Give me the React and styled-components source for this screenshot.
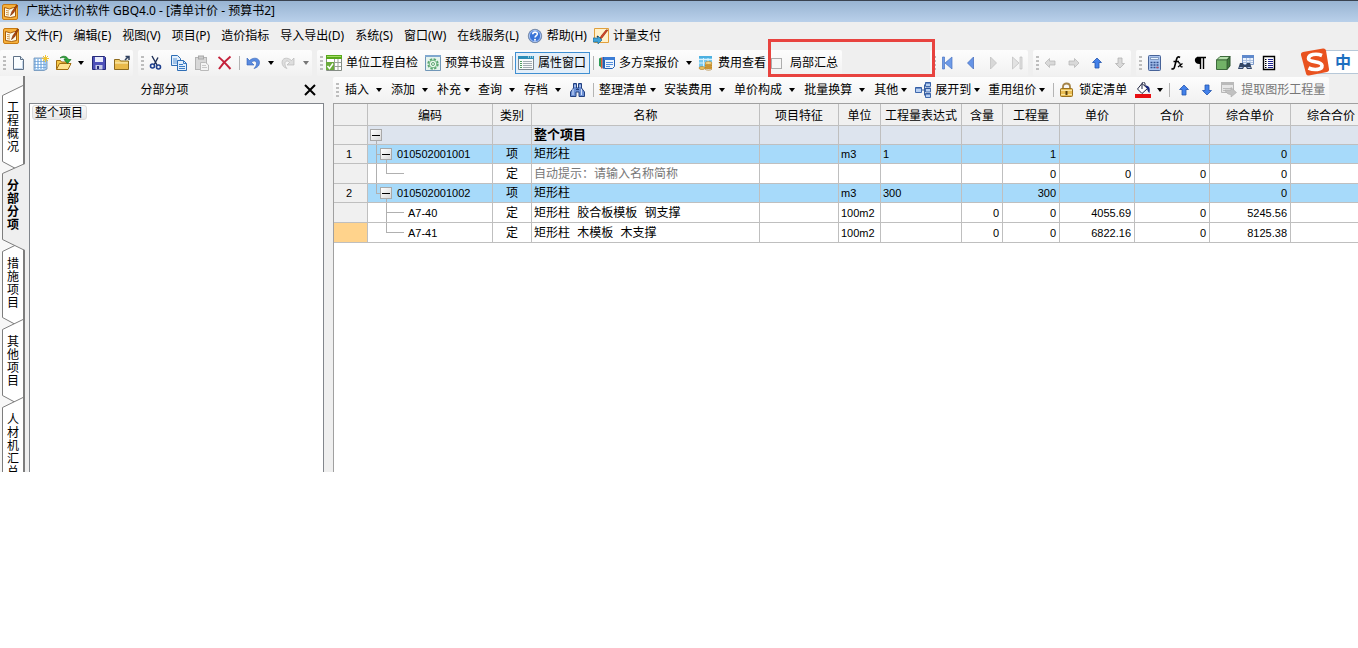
import React from 'react';
import styled, { createGlobalStyle, css } from 'styled-components';

const GlobalStyle = createGlobalStyle`
  * {
    box-sizing: border-box;
  }
  body {
    margin: 0;
    background: #fff;
    color: #000;
    font-family: 'Noto Sans', 'Noto Sans CJK SC', sans-serif;
    font-size: 12px;
    line-height: 16px;
  }
  button {
    border: 0;
    padding: 0;
    background: none;
    color: inherit;
    font: inherit;
    white-space: nowrap;
  }
  svg {
    display: block;
    flex: none;
  }
`

const TitleBar = styled.header`
  display: flex;
  align-items: center;
  gap: 8px;
  height: 22px;
  padding-left: 2px;
  border-top: 1px solid #39424f;
  background: linear-gradient(#98b4d2, #b9d0ea);
`

const Title = styled.h1`
  margin: 0;
  font-size: 12px;
  font-weight: 400;
  line-height: 20px;
  padding-bottom: 2px;
`

const MenuBar = styled.nav`
  display: flex;
  align-items: center;
  gap: 11px;
  height: 27px;
  padding-left: 3px;
  background: #efefef;
`

const MenuItem = styled.button`
  display: flex;
  align-items: center;
  gap: 4px;
`

const MenuLead = styled.div`
  display: flex;
  align-items: center;
  gap: 6px;
`

const HelpMenus = styled(MenuLead)`
  margin-left: -3px;
`

const Toolbar = styled.div`
  position: relative;
  display: flex;
  gap: 5px;
  height: 27px;
  padding-top: 1px;
  background: #efefef;
`

const Group = styled.div`
  display: flex;
  flex: none;
  align-items: center;
  height: 26px;
  border-radius: 2px;
  background: linear-gradient(#fdfdfd, #f1f1f1);
`

const Grip = styled.span`
  width: 3px;
  height: 15px;
  margin-left: 3px;
  margin-right: ${props => (props.$wide ? '3px' : 0)};
  background: repeating-linear-gradient(#bdbdbd 0 2px, transparent 2px 4px);
`

const Separator = styled.span`
  width: 1px;
  height: 14px;
  margin: 0 2px 0 3px;
  background: #b4b4b4;
`

const Slot = styled.div`
  flex: none;
  width: 78px;
`

const IconButton = styled.button`
  display: flex;
  align-items: center;
  justify-content: center;
  width: 23px;
  height: 22px;
`

const ArrowButton = styled.button`
  display: flex;
  align-items: center;
  justify-content: center;
  width: 12px;
  height: 22px;
`

const TextButton = styled.button`
  display: flex;
  align-items: center;
  gap: 4px;
  height: 22px;
  padding: 0 4px 0 3px;
  color: ${props => (props.disabled ? '#777' : '#000')};
  ${props => props.$active && css`
    padding: 0 3px 0 2px;
    border: 1px solid #3f8fd2;
    background: #e4eff9;
  `}
`

const DropButton = styled(TextButton)`
  gap: ${props => (props.$tight ? '3px' : '7px')};
  padding-right: ${props => (props.$tight ? '5px' : '6px')};
`

const DropLabel = styled.span`
  display: flex;
  align-items: center;
  gap: 4px;
`

const Caret = styled.span`
  border: solid transparent;
  border-width: 4px 3px 0;
  border-top-color: ${props => (props.$muted ? '#777' : '#000')};
`

const ScopeLabel = styled.label`
  position: relative;
  display: flex;
  align-items: center;
  gap: 8px;
  height: 26px;
  padding: 0 4px 0 1px;
`

const CheckBox = styled.input`
  appearance: none;
  width: 11px;
  height: 11px;
  margin: 0;
  border: 1px solid #adadad;
  background: #f6f6f6;
`

const Highlight = styled.span`
  position: absolute;
  top: -11px;
  left: -2px;
  width: 167px;
  height: 38px;
  border: 3px solid #e8433f;
  pointer-events: none;
  z-index: 2;
`

const ImeBar = styled.div`
  position: absolute;
  top: -1px;
  right: 0;
  display: flex;
  align-items: center;
`

const ImeMode = styled.button`
  width: 40px;
  height: 24px;
  margin-left: -12px;
  padding-left: 10px;
  border: solid #b7c8d8;
  border-width: 1px 0;
  background: #fff;
  color: #1c6fc0;
  font-size: 16px;
  font-weight: 700;
  line-height: 20px;
`

const ImeMark = styled.svg`
  position: relative;
  z-index: 1;
`

const Workspace = styled.main`
  display: flex;
  height: 396px;
  overflow: hidden;
  background: #efefef;
`

const TabStrip = styled.div`
  flex: none;
  width: 25px;
  padding: 9px 0 0 2px;
  border-right: 2px solid #7d7d7d;
  background: #f7f7f7;
`

const Tab = styled.button`
  position: relative;
  z-index: ${props => (props.$selected ? 3 : 1)};
  display: flex;
  align-items: flex-start;
  width: 23px;
  height: 88px;
  margin-bottom: -10px;
  padding: 16px 0 0 5px;
  font-weight: ${props => (props.$selected ? 700 : 400)};
`

const TabShape = styled.svg`
  position: absolute;
  top: 0;
  left: 0;
`

const TabText = styled.span`
  position: relative;
  width: 12px;
  line-height: 13px;
  white-space: normal;
  word-break: break-all;
`

const SidePanel = styled.section`
  display: flex;
  flex: none;
  flex-direction: column;
  width: 299px;
  padding-left: 4px;
`

const PanelHeader = styled.div`
  display: flex;
  align-items: center;
  height: 27px;
  padding-right: 8px;
`

const PanelTitle = styled.h2`
  flex: 1;
  margin: 0;
  padding-right: 4px;
  font-size: 12px;
  font-weight: 400;
  text-align: center;
`

const TreeBox = styled.div`
  flex: 1;
  padding: 1px 2px;
  border: solid #82868c;
  border-width: 1px 1px 0;
  background: #fff;
`

const TreeNode = styled.button`
  height: 15px;
  padding: 0 3px 0 2px;
  border: 1px solid #dcdcdc;
  border-radius: 3px;
  background: linear-gradient(#fafafa, #e8e8e8);
  line-height: 13px;
`

const Content = styled.section`
  flex: 1;
  min-width: 0;
  margin-left: 9px;
  display: flex;
  flex-direction: column;
`

const GridBox = styled.div`
  flex: 1;
  overflow: hidden;
  border: solid #a0a0a0;
  border-width: 1px 0 0 1px;
  background: #fff;
`

const Grid = styled.table`
  width: 1038px;
  table-layout: fixed;
  border-collapse: separate;
  border-spacing: 0;
`

const cellBase = css`
  padding: 0;
  border: solid #bfbfbf;
  border-width: 0 1px 1px 0;
  overflow: hidden;
  white-space: nowrap;
`

const HeadCell = styled.th`
  ${cellBase}
  height: 22px;
  padding-top: 2px;
  background: #f0f0f0;
  font-weight: 400;
`

const rowColors = {
  project: '#dde4ee',
  list: '#a7dafa',
  quota: '#fff'
}

const Row = styled.tr`
  height: ${props => (props.$kind === 'quota' ? '20px' : '19px')};
  background: ${props => rowColors[props.$kind]};
`

const Cell = styled.td`
  ${cellBase}
  padding: 0 2px;
  line-height: 14px;
  text-align: ${props => props.$align || 'left'};
`

const ValueCell = styled(Cell)`
  padding: 0 3px 0 2px;
  font-family: 'Liberation Sans', 'Noto Sans CJK SC', sans-serif;
  font-size: 11px;
`

const NumberCell = styled(ValueCell)`
  padding: 0 3px 0 0;
  background: ${props => (props.$current ? '#ffd38c' : '#f0f0f0')};
`

const NameCell = styled(Cell)`
  padding: 2px 2px 0;
  font-family: 'Liberation Mono', 'Noto Sans CJK SC', monospace;
  font-size: ${props => (props.$bold ? '13px' : '12px')};
  font-weight: ${props => (props.$bold ? 700 : 400)};
  color: ${props => (props.$hint ? '#777' : '#000')};
`

const CodeCell = styled(ValueCell)`
  position: relative;
  padding: 0;
`

const codeIndent = {
  project: '2px',
  list: '12px',
  quota: '40px'
}

const CodeLine = styled.div`
  position: relative;
  display: flex;
  align-items: center;
  gap: 5px;
  padding-left: ${props => codeIndent[props.$kind]};
`

const Guides = styled.svg`
  position: absolute;
  top: 0;
  left: 0;
`

const Toggle = styled.button`
  display: flex;
  align-items: center;
  justify-content: center;
  width: 12px;
  height: 12px;
  border: 1px solid #a8a8a8;
  background: linear-gradient(135deg, #fff, #d8d8d8);

  &::after {
    content: '';
    width: 8px;
    height: 1px;
    background: #000;
  }
`

const Svg = ({ children }) => (
  <svg width="16" height="16" viewBox="0 0 16 16" fill="none" aria-hidden="true">{children}</svg>
)

const icons = {
  app: (
    <Svg>
      <rect x=".5" y=".5" width="15" height="15" rx="1.5" fill="#f6b13c" stroke="#c87a10" />
      <path d="M2.500 3.500l5 1.500 4-1.500 2 0v9l-5 1-6-1z" fill="#fffbea" stroke="#a85d0a" />
      <path d="M4 6.500l3 .5M4 8.500l3 .5M4 10.500l3 .5" stroke="#c07a20" strokeWidth=".8" />
      <path d="M14.500 1L10 7.500l-1.500 4 3-2.500 4-7.500z" fill="#b4480d" stroke="#6f2504" strokeWidth=".6" />
    </Svg>
  ),
  newDoc: (
    <Svg>
      <path d="M3.500 1.500h7l3 3v10h-10z" fill="#fafdff" stroke="#5f7186" />
      <path d="M10.500 1.500v3h3" fill="#dce9f6" stroke="#5f7186" />
      <path d="M12.500 6v7.500h-8" stroke="#c6d7ea" />
    </Svg>
  ),
  newBook: (
    <Svg>
      <path d="M1 3h10l3 2v9l-3 1.500H1z" fill="#a8cdf0" stroke="#6a8fb8" strokeWidth=".8" />
      <path d="M3.500 4v10M6.500 4v10M9.500 4v10" stroke="#fff" />
      <path d="M1 6.500h12M1 9.500h12M1 12.500h12" stroke="#6a9bd0" strokeWidth=".7" />
      <path d="M12.500 0v7M9 3.500h7M10 1l5 5M15 1l-5 5" stroke="#f2c430" />
    </Svg>
  ),
  open: (
    <Svg>
      <path d="M.5 14.500v-9h4l1 1.500h6v3" fill="#f7c948" stroke="#a26d10" />
      <path d="M.5 14.500l3-6h11.500l-3 6z" fill="#ffe48e" stroke="#a26d10" />
      <path d="M4 3c3-3 7-2 8.500 1.500H15l-3.500 4-3.500-4h2C9 2.500 7 2 4 3z" fill="#2da83a" stroke="#14701e" strokeWidth=".7" />
    </Svg>
  ),
  save: (
    <Svg>
      <path d="M1.500 1.500h12l1 1v12h-13z" fill="#4d50b8" stroke="#252a78" />
      <path d="M4 2h8v5H4z" fill="#e9ecfb" />
      <path d="M4.500 10h7v4.500h-7z" fill="#c6cbe6" />
      <path d="M6 11h2v3H6z" fill="#252a78" />
    </Svg>
  ),
  folderUp: (
    <Svg>
      <path d="M.5 14.500v-10h5l1 1.500h8v8.500z" fill="#f3cf6c" stroke="#8d6a1e" />
      <path d="M1 8h13v6H1z" fill="#e9b94a" />
      <path d="M1 8h13" stroke="#fdf0bd" />
      <path d="M11 5l3-3M11.500 1.500h3.500v3.500" stroke="#30415f" strokeWidth="1.500" />
    </Svg>
  ),
  cut: (
    <Svg>
      <path d="M4 1l5 9M10 2.500L6 10" stroke="#1c2d55" strokeWidth="1.400" />
      <circle cx="4.500" cy="11" r="2" stroke="#1e3f8e" strokeWidth="1.600" />
      <circle cx="10.500" cy="12" r="2" stroke="#1e3f8e" strokeWidth="1.600" />
    </Svg>
  ),
  copy: (
    <Svg>
      <path d="M.5.5h6l3 3v7h-9z" fill="#e2effc" stroke="#2f6eb5" />
      <path d="M2 4h4M2 6h6M2 8h6" stroke="#5c96d6" />
      <path d="M6.500 5.500h6l3 3v7h-9z" fill="#e2effc" stroke="#2f6eb5" />
      <path d="M12.500 5.500v3h3M8 9.500h4M8 11.500h6M8 13.500h6" stroke="#3c7cc4" />
    </Svg>
  ),
  paste: (
    <Svg>
      <rect x="1.500" y="2.500" width="11" height="12" fill="#d8d8d8" stroke="#b4b4b4" />
      <rect x="4.500" y="1" width="5" height="3" fill="#cdcdcd" stroke="#a8a8a8" />
      <path d="M6.500 7.500h5l3 2.500v5.500h-8z" fill="#f4f4f4" stroke="#bababa" />
      <path d="M8 10.500h4M8 12.500h5" stroke="#c8c8c8" />
    </Svg>
  ),
  remove: <Svg><path d="M1.500 2c4 3 8 7.500 12 12M13.500 1.500C9 5 5 9.500 2 14" stroke="#c4203a" strokeWidth="2" /></Svg>,
  undo: (
    <Svg>
      <path d="M1 3v7h7L5.500 7.500C8 5 10.500 6 10.500 8.500c0 2-1 3.500-2.500 5 4-1 5.500-3.500 5.500-6C13.500 3 8 1.500 3.500 5.500z" fill="#5a8be0" stroke="#2f5fb5" strokeWidth=".6" />
    </Svg>
  ),
  redo: (
    <Svg>
      <path d="M13 3v7H6l2.500-2.500C6.500 5 4 6 4 8.500c0 2 .5 3.500 2 5-3.500-1-5-3.500-5-6C1 3 6 1.500 10.500 5.500z" fill="#dedede" stroke="#b9b9b9" strokeWidth=".7" />
    </Svg>
  ),
  check: (
    <Svg>
      <path d="M.5.5h15v15H.5z" fill="#fff" stroke="#848c84" />
      <path d="M0 0h16v4H0z" fill="#58a81c" />
      <path d="M1 1h14v1H1z" fill="#a3dc62" />
      <path d="M1 7.500h14M1 11.500h14M8.500 4v11M12 4v11" stroke="#99a399" />
      <path d="M0 7h8v8H0z" fill="#6aab3c" />
      <path d="M1.500 11l2 2.500L7 8.500" stroke="#fff" strokeWidth="1.500" />
    </Svg>
  ),
  gear: (
    <Svg>
      <path d="M.5.5h15v15H.5z" fill="#e5f3ed" stroke="#7197b8" />
      <path d="M0 0h16v2H0z" fill="#80a8cf" />
      <circle cx="8" cy="9" r="4.800" fill="#eff8ef" stroke="#5da772" strokeWidth="1.800" strokeDasharray="2.400 1.370" />
      <circle cx="8" cy="9" r="3.800" stroke="#72b683" />
      <circle cx="8" cy="9" r="1.500" stroke="#5da772" />
    </Svg>
  ),
  properties: (
    <Svg>
      <path d="M.5 1.500h15v13H.5z" fill="#f8fafa" stroke="#7c8890" />
      <path d="M0 1h16v3H0z" fill="#2c8db8" />
      <path d="M10 2h1M12 2h1M14 2h1" stroke="#fff" />
      <path d="M2 6.500h2M2 8.500h2M2 10.500h2M2 12.500h2" stroke="#4f9e5d" />
      <path d="M5 6.500h9M5 8.500h9M5 10.500h9M5 12.500h9" stroke="#a2abb2" />
    </Svg>
  ),
  plans: (
    <Svg>
      <path d="M0 3.500l2-1v10l-2-2z" fill="#2e9c58" />
      <path d="M2 2.500h1.500v11H2z" fill="#e05a32" />
      <path d="M3.500 2H5v12l-1.500-1z" fill="#2560b5" />
      <path d="M5.500 2.500h10v9l-2 2h-8z" fill="#edf5ff" stroke="#2560b5" />
      <path d="M5 2h11v3H5z" fill="#3c7dd5" />
      <path d="M7 7.500h7M7 9.500h7M7 11.500h4" stroke="#5590dd" />
    </Svg>
  ),
  fee: (
    <Svg>
      <path d="M1 1h13v11H1z" fill="#77c8ee" />
      <path d="M1 4.500h13M1 8h13M5.500 1v11M10 1v11" stroke="#d9f2fc" />
      <path d="M1 1h13v2H1z" fill="#4cb0e0" />
      <path d="M7 8h7v6H7z" fill="#dba33c" />
      <ellipse cx="10.500" cy="8" rx="3.500" ry="1.500" fill="#f6d98a" stroke="#a87722" strokeWidth=".6" />
      <path d="M7 10c1 1.500 6 1.500 7 0M7 12c1 1.500 6 1.500 7 0M7 14c1 1.500 6 1.500 7 0" stroke="#a87722" strokeWidth=".7" />
      <ellipse cx="4" cy="13" rx="3" ry="1.500" fill="#ecc161" stroke="#a87722" strokeWidth=".6" />
    </Svg>
  ),
  help: (
    <Svg>
      <circle cx="8" cy="8" r="6.700" fill="#3a74d8" stroke="#7d8ea8" />
      <circle cx="8" cy="8" r="5.600" stroke="#c6d8f8" strokeWidth=".8" />
      <path d="M5.700 6.300C5.900 3.300 10.600 3.500 10.300 6.200 10 7.600 8.200 7.600 8 9.500" stroke="#fff" strokeWidth="1.600" />
      <circle cx="8" cy="11.800" r="1" fill="#fff" />
    </Svg>
  ),
  pay: (
    <Svg>
      <path d="M1.500.5h14v14h-14z" fill="#fff1cb" stroke="#e1a03c" />
      <path d="M4 8l3 3 7-9" stroke="#3b2a1d" strokeWidth="1.300" />
      <path d="M15 2l-6 8-2 1 1-3 5-6z" fill="#d8482a" stroke="#8e2713" strokeWidth=".5" />
      <path d="M0 10h5V8l4 4-4 4v-2H0z" fill="#3fa4d8" stroke="#1d6a98" strokeWidth=".7" />
    </Svg>
  ),
  first: <Svg><path d="M2.500 2h2v12h-2zM12 2v12L5 8z" fill="#6e9be8" stroke="#4a74c2" strokeWidth=".7" /></Svg>,
  prev: <Svg><path d="M10.500 2v12l-6-6z" fill="#6694e6" stroke="#4068ba" strokeWidth=".7" /></Svg>,
  next: <Svg><path d="M4.500 2v12l6-6z" fill="#d8d8d8" stroke="#bdbdbd" strokeWidth=".7" /></Svg>,
  last: <Svg><path d="M11 2h2v12h-2zM3.500 2v12l6.500-6z" fill="#e2e2e2" stroke="#bdbdbd" strokeWidth=".7" /></Svg>,
  left: <Svg><path d="M2 8l4.500-4.500V6H12v4H6.500v2.500z" fill="#d9d9d9" stroke="#b3b3b3" strokeWidth=".7" /></Svg>,
  right: <Svg><path d="M13 8L8.500 3.500V6H3v4h5.500v2.500z" fill="#d9d9d9" stroke="#b3b3b3" strokeWidth=".7" /></Svg>,
  up: <Svg><path d="M8 3l4.500 4.500H10V13H6V7.500H3.500z" fill="#4381ea" stroke="#2455ad" strokeWidth=".8" /></Svg>,
  down: <Svg><path d="M8 13l4.500-4.500H10V3H6v5.500H3.500z" fill="#4381ea" stroke="#2455ad" strokeWidth=".8" /></Svg>,
  downOff: <Svg><path d="M8 13l4.500-4.500H10V3H6v5.500H3.500z" fill="#d9d9d9" stroke="#b3b3b3" strokeWidth=".8" /></Svg>,
  calc: (
    <Svg>
      <rect x="2.500" y=".5" width="12" height="15" rx="1" fill="#a9c3ee" stroke="#476398" />
      <path d="M4.500 2.500h8v2h-8z" fill="#eaf5ff" stroke="#52709f" strokeWidth=".6" />
      <path d="M4.500 7.500h8M4.500 10h8M4.500 12.500h8" stroke="#33508f" strokeWidth="1.500" strokeDasharray="2 1" />
      <path d="M10.500 12.500h2" stroke="#c2485e" strokeWidth="1.500" />
    </Svg>
  ),
  formula: (
    <Svg>
      <path d="M11 2.500c-2-1.500-3 0-3.500 2L5.500 12c-.5 2-1.500 2.500-3 1.500M4.500 6.500H10" stroke="#000" strokeWidth="1.600" />
      <path d="M9 8c1.500-1 2 0 2.300 2 .3 1.800 1 2.500 2.200 1.500M13.500 8.500L9 12" stroke="#000" strokeWidth="1.200" />
    </Svg>
  ),
  paragraph: (
    <Svg>
      <path d="M8 2v7C1.500 9.500 1.500 2 6 2z" fill="#000" />
      <path d="M5 2.500h9M8.500 2v12M11.500 2v12" stroke="#000" strokeWidth="1.400" />
    </Svg>
  ),
  cube: (
    <Svg>
      <path d="M1.500 5l3.500-3.500h10L12 5z" fill="#b6e0ac" stroke="#3e6b3c" />
      <path d="M12 5l3-3.500v9.500L12 14.500z" fill="#417b3e" stroke="#2d552c" />
      <path d="M1.500 5H12v9.500H1.500z" fill="#72b267" stroke="#3e6b3c" />
    </Svg>
  ),
  findTable: (
    <Svg>
      <path d="M4.500.5h11v9h-11z" fill="#eef4fd" stroke="#7b98c8" />
      <path d="M4 0h12v3H4z" fill="#5f89cc" />
      <path d="M5 5.500h10M5 7.500h10M8.500 3v6M12 3v6" stroke="#a9bfdf" />
      <path d="M2 8h3l1 2h2l1-2h3l2 6h-5l-1-2H6l-1 2H0z" fill="#344765" />
      <path d="M1.500 12.500h3M9.500 12.500h3" stroke="#a9bfe4" />
    </Svg>
  ),
  list: (
    <Svg>
      <path d="M2.500 1.500h11v13h-11z" fill="#fff" stroke="#000" strokeWidth="1.400" />
      <path d="M4 4.500h1.500M4 6.500h1.500M4 8.500h1.500M4 10.500h1.500M4 12.500h1.500" stroke="#000" />
      <path d="M7 4.500h5M7 6.500h5M7 8.500h5M7 10.500h5M7 12.500h5" stroke="#1f2490" />
    </Svg>
  ),
  binoculars: (
    <Svg>
      <path d="M3.500 1.500h3V6h2V1.500h3V6l3 4v4.500H9V10H6v4.500H.5V10l3-4z" fill="#6b8fd4" stroke="#23407f" />
      <path d="M3 7v6M11.500 7v6M5 3v2M10 3v2" stroke="#d3e1fb" />
      <path d="M6 7.500h3" stroke="#23407f" />
    </Svg>
  ),
  branch: (
    <Svg>
      <path d="M5 8h4M9.500 3v10M9 3h2M9 13h2" stroke="#3a5f9d" />
      <path d="M.5 5.500h6v5h-6zM10.500.5h5v4h-5zM10.500 6h5v4h-5zM10.500 11.500h5v4h-5z" fill="#b7d0f3" stroke="#3f68ad" />
      <path d="M.5 6h6M10.500 1h5M10.500 6.500h5M10.500 12h5" stroke="#2d559f" />
    </Svg>
  ),
  lock: (
    <Svg>
      <path d="M4 8V4.500c0-4 7-4 7 0V8" stroke="#a5854a" strokeWidth="1.800" />
      <rect x="1.500" y="6.500" width="12" height="8" rx="1" fill="#e9bd53" stroke="#98701f" />
      <path d="M2 8.500h11M2 12.500h11" stroke="#f9e39f" />
      <path d="M7.500 9v4" stroke="#59400d" strokeWidth="2" />
    </Svg>
  ),
  bucket: (
    <Svg>
      <path d="M0 12h16v4H0z" fill="#e80f12" />
      <path d="M7 1.500l5.500 5L7 11.500 2.500 7z" fill="#fff" stroke="#1d2340" />
      <path d="M7 7V1.500C7-.5 10-.5 10 2v2" stroke="#1d2340" />
      <path d="M10 3.500c4 0 5.500 2 4.500 7.500-1.500-1-2-2.500-2.500-4.500z" fill="#1b2a80" />
    </Svg>
  ),
  extract: (
    <Svg>
      <path d="M.5.5h12v10H.5z" fill="#e6e6e6" stroke="#b7b7b7" />
      <path d="M0 0h13v3H0z" fill="#bababa" />
      <path d="M2 6.500h8M2 8.500h5" stroke="#bcbcbc" />
      <path d="M4 8h6V5.500l5.500 5L10 15v-2.500C7 12.500 5 11 4 8z" fill="#c1c1c1" stroke="#a9a9a9" strokeWidth=".6" />
    </Svg>
  )
}

const CloseIcon = () => (
  <svg width="12" height="12" viewBox="0 0 12 12" aria-hidden="true">
    <path d="M1 1l10 10M11 1L1 11" stroke="#000" strokeWidth="2" />
  </svg>
)

const ImeLogo = () => (
  <ImeMark width="30" height="28" viewBox="0 0 30 28" aria-hidden="true">
    <path d="M3 4L23 .5c1.500-.2 2.500.5 3 2L29 21c.2 1.500-.5 2.500-2 3L9 27.500c-1.500.2-2.500-.5-3-2L1 7c-.3-1.500.5-2.700 2-3z" fill="#e9521f" />
    <path d="M22 7.500C16 5 8.500 6.500 8.500 10.500c0 4.500 13 2 13.500 7 .3 4.500-8 5-13.500 2.500" fill="none" stroke="#fff" strokeWidth="3.600" />
  </ImeMark>
)

const Tool = ({ icon, label, disabled }) => (
  <IconButton type="button" aria-label={label} disabled={disabled}>{icons[icon]}</IconButton>
)

const Arrow = ({ label, muted }) => (
  <ArrowButton type="button" aria-label={label}><Caret $muted={muted} /></ArrowButton>
)

const Drop = ({ icon, tight, children }) => (
  <DropButton type="button" $tight={tight}>
    <DropLabel>{icon && icons[icon]}{children}</DropLabel>
    <Caret />
  </DropButton>
)

const menus = ['编辑(E)', '视图(V)', '项目(P)', '造价指标', '导入导出(D)', '系统(S)', '窗口(W)', '在线服务(L)']

const tabs = ['工程概况', '分部分项', '措施项目', '其他项目', '人材机汇总']

const columns = [
  { title: '', width: 34 },
  { title: '编码', width: 125 },
  { title: '类别', width: 39 },
  { title: '名称', width: 228 },
  { title: '项目特征', width: 79 },
  { title: '单位', width: 42 },
  { title: '工程量表达式', width: 81 },
  { title: '含量', width: 41 },
  { title: '工程量', width: 57 },
  { title: '单价', width: 75 },
  { title: '合价', width: 75 },
  { title: '综合单价', width: 81 },
  { title: '综合合价', width: 81 }
]

// guide: path of the tree lines inside the code cell
const rows = [
  { kind: 'project', name: '整个项目', guide: 'M8.5 15v5' },
  { no: '1', kind: 'list', code: '010502001001', type: '项', name: '矩形柱', unit: 'm3', expr: '1', qty: '1', fullPrice: '0', guide: 'M8.5 0v20M8.5 9.5h4M18.5 15v5' },
  { kind: 'quota', type: '定', name: '自动提示：请输入名称简称', hint: true, qty: '0', price: '0', total: '0', fullPrice: '0', guide: 'M8.5 0v20M18.5 0v9.5h17' },
  { no: '2', kind: 'list', code: '010502001002', type: '项', name: '矩形柱', unit: 'm3', expr: '300', qty: '300', fullPrice: '0', guide: 'M8.5 0v9.5h4M18.5 15v5' },
  { kind: 'quota', code: 'A7-40', type: '定', name: '矩形柱 胶合板模板 钢支撑', unit: '100m2', content: '0', qty: '0', price: '4055.69', total: '0', fullPrice: '5245.56', guide: 'M18.5 0v20M18.5 9.5h17' },
  { kind: 'quota', code: 'A7-41', type: '定', name: '矩形柱 木模板 木支撑', unit: '100m2', content: '0', qty: '0', price: '6822.16', total: '0', fullPrice: '8125.38', current: true, guide: 'M18.5 0v9.5h17' }
]

const MainToolbar = () => (
  <Toolbar role="toolbar">
    <Group>
      <Grip />
      <Tool icon="newDoc" label="新建" />
      <Tool icon="newBook" label="新建预算书" />
      <Tool icon="open" label="打开" />
      <Arrow label="打开选项" />
      <Tool icon="save" label="保存" />
      <Tool icon="folderUp" label="另存为" />
    </Group>
    <Group>
      <Grip />
      <Tool icon="cut" label="剪切" />
      <Tool icon="copy" label="复制" />
      <Tool icon="paste" label="粘贴" disabled />
      <Tool icon="remove" label="删除" />
      <Separator />
      <Tool icon="undo" label="撤销" />
      <Arrow label="撤销列表" />
      <Tool icon="redo" label="恢复" disabled />
      <Arrow label="恢复列表" muted />
    </Group>
    <Group>
      <Grip />
      <TextButton type="button">{icons.check}单位工程自检</TextButton>
      <TextButton type="button">{icons.gear}预算书设置</TextButton>
      <Separator />
      <TextButton type="button" $active>{icons.properties}属性窗口</TextButton>
      <Separator />
      <TextButton type="button">{icons.plans}多方案报价</TextButton>
      <Arrow label="多方案报价选项" />
      <TextButton type="button">{icons.fee}费用查看</TextButton>
      <ScopeLabel>
        <CheckBox type="checkbox" />
        局部汇总
        <Highlight />
      </ScopeLabel>
    </Group>
    <Slot />
    <Group>
      <Grip />
      <Tool icon="first" label="首行" />
      <Tool icon="prev" label="上一行" />
      <Tool icon="next" label="下一行" disabled />
      <Tool icon="last" label="末行" disabled />
    </Group>
    <Group>
      <Grip />
      <Tool icon="left" label="升级" disabled />
      <Tool icon="right" label="降级" disabled />
      <Tool icon="up" label="上移" />
      <Tool icon="downOff" label="下移" disabled />
    </Group>
    <Group>
      <Grip />
      <Tool icon="calc" label="计算器" />
      <Tool icon="formula" label="函数" />
      <Tool icon="paragraph" label="特殊符号" />
      <Tool icon="cube" label="图元公式" />
      <Tool icon="findTable" label="查找" />
      <Tool icon="list" label="列表" />
    </Group>
    <ImeBar>
      <ImeLogo />
      <ImeMode type="button">中</ImeMode>
    </ImeBar>
  </Toolbar>
)

const EditToolbar = () => (
  <Toolbar role="toolbar">
    <Group>
      <Grip $wide />
      <Drop>插入</Drop>
      <Drop>添加</Drop>
      <Drop tight>补充</Drop>
      <Drop>查询</Drop>
      <Drop>存档</Drop>
      <TextButton type="button" aria-label="查找">{icons.binoculars}</TextButton>
      <Separator />
      <Drop tight>整理清单</Drop>
      <Drop>安装费用</Drop>
      <Drop>单价构成</Drop>
      <Drop>批量换算</Drop>
      <Drop tight>其他</Drop>
      <Drop icon="branch" tight>展开到</Drop>
      <Drop tight>重用组价</Drop>
      <Separator />
      <TextButton type="button">{icons.lock}锁定清单</TextButton>
      <Tool icon="bucket" label="填充颜色" />
      <Arrow label="选择颜色" />
      <Separator />
      <Tool icon="up" label="上移" />
      <Tool icon="down" label="下移" />
      <TextButton type="button" disabled>{icons.extract}提取图形工程量</TextButton>
    </Group>
  </Toolbar>
)

const BudgetGrid = () => (
  <Grid>
    <colgroup>
      {columns.map((column, i) => <col key={i} style={{ width: column.width }} />)}
    </colgroup>
    <thead>
      <tr>
        {columns.map((column, i) => <HeadCell key={i} scope="col">{column.title}</HeadCell>)}
      </tr>
    </thead>
    <tbody>
      {rows.map((row, i) => (
        <Row key={i} $kind={row.kind}>
          <NumberCell $align="center" $current={row.current}>{row.no}</NumberCell>
          <CodeCell>
            <Guides width="40" height="20" shapeRendering="crispEdges" aria-hidden="true">
              <path d={row.guide} fill="none" stroke="#b0b0b0" />
            </Guides>
            <CodeLine $kind={row.kind}>
              {row.kind !== 'quota' && <Toggle type="button" aria-label="折叠" />}
              {row.code}
            </CodeLine>
          </CodeCell>
          <Cell $align="center">{row.type}</Cell>
          <NameCell $bold={row.kind === 'project'} $hint={row.hint}>{row.name}</NameCell>
          <Cell />
          <ValueCell>{row.unit}</ValueCell>
          <ValueCell>{row.expr}</ValueCell>
          <ValueCell $align="right">{row.content}</ValueCell>
          <ValueCell $align="right">{row.qty}</ValueCell>
          <ValueCell $align="right">{row.price}</ValueCell>
          <ValueCell $align="right">{row.total}</ValueCell>
          <ValueCell $align="right">{row.fullPrice}</ValueCell>
          <ValueCell />
        </Row>
      ))}
    </tbody>
  </Grid>
)

export default function App () {
  return (
    <React.Fragment>
      <GlobalStyle />
      <TitleBar>
        {icons.app}
        <Title>广联达计价软件 GBQ4.0 - [清单计价 - 预算书2]</Title>
      </TitleBar>
      <MenuBar>
        <MenuLead>
          {icons.app}
          <MenuItem type="button">文件(F)</MenuItem>
        </MenuLead>
        {menus.map(menu => <MenuItem key={menu} type="button">{menu}</MenuItem>)}
        <HelpMenus>
          <MenuItem type="button">{icons.help}帮助(H)</MenuItem>
          <MenuItem type="button">{icons.pay}计量支付</MenuItem>
        </HelpMenus>
      </MenuBar>
      <MainToolbar />
      <Workspace>
        <TabStrip role="tablist">
          {tabs.map((tab, i) => {
            const selected = i === 1
            return (
              <Tab key={tab} type="button" role="tab" aria-selected={selected} $selected={selected}>
                <TabShape width="23" height="88" aria-hidden="true">
                  <path
                    d={selected ? 'M23 .5L.5 10.500v66L23 87.500' : 'M21 .5L.5 10.500v66L21 87.500'}
                    fill={selected ? '#efefef' : '#fff'}
                    stroke="#7d7d7d"
                  />
                </TabShape>
                <TabText>{tab}</TabText>
              </Tab>
            )
          })}
        </TabStrip>
        <SidePanel>
          <PanelHeader>
            <PanelTitle>分部分项</PanelTitle>
            <button type="button" aria-label="关闭"><CloseIcon /></button>
          </PanelHeader>
          <TreeBox>
            <TreeNode type="button">整个项目</TreeNode>
          </TreeBox>
        </SidePanel>
        <Content>
          <EditToolbar />
          <GridBox>
            <BudgetGrid />
          </GridBox>
        </Content>
      </Workspace>
    </React.Fragment>
  )
}
